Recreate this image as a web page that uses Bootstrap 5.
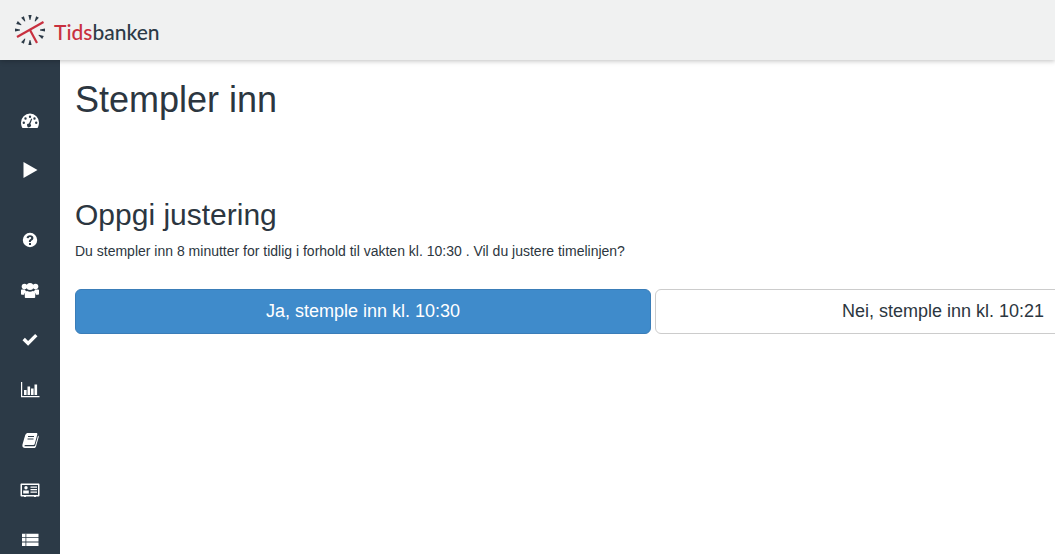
<!DOCTYPE html>
<html lang="no">
<head>
<meta charset="utf-8">
<title>Stempler inn</title>
<link href="https://cdn.jsdelivr.net/npm/bootstrap@5.3.0/dist/css/bootstrap.min.css" rel="stylesheet">
<style>
html,body{height:100%;overflow:hidden}
body{font-family:"Liberation Sans",Arial,sans-serif;color:#2c3640;background:#fff;width:1055px}
.topbar{height:60px;background:#f0f1f1;box-shadow:0 1px 5px rgba(0,0,0,.25);position:relative;z-index:2;padding-left:14px}
.brand-name{font-family:Lato,sans-serif;font-size:21px;line-height:1;color:#2c3a47;margin-left:8px;padding-top:2px;font-weight:500}
.brand-name b{font-weight:500;color:#c8303f}
.main-area{height:494px}
.sidenav{width:60px;flex:none;background:#2c3a47;padding-top:36px}
.nav-slot{height:50px;width:60px;display:flex;align-items:center;justify-content:center}
.nav-slot svg{width:20px;height:20px;fill:#fff;display:block}
.nav-gap{height:19px}
.content-pane{width:1156px;flex:none;padding-left:15px}
.page-title{font-size:36px;font-weight:400;line-height:40px;margin:20px 0 0;color:#2c3640}
.sub-title{font-size:30px;font-weight:400;line-height:33px;margin:78px 0 0;color:#2c3640}
.lead-note{font-size:14px;line-height:20px;margin:10px 0 0;color:#2c3640}
.btn-row{margin-top:28px;gap:4px}
.btn-stamp{flex:none;width:576px;height:45px;font-size:18px;line-height:1.3;border-radius:6px;padding:0 12px;display:flex;align-items:center;justify-content:center}
.btn-yes{background:#3f8bcb;border:1px solid #3a7db8;color:#fff}
.btn-no{background:#fff;border:1px solid #ccc;color:#2c3640}
</style>
</head>
<body>
<header class="topbar d-flex align-items-center">
  <svg width="32" height="32" viewBox="0 0 32 32" aria-label="Tidsbanken-logo">
    <g fill="#2c3a47">
      <path d="M14.400 1h3.200l-1.200 5h-.8z"/>
      <path d="M14.400 1h3.200l-1.200 5h-.8z" transform="rotate(30 16 16)"/>
      <path d="M14.400 1h3.200l-1.200 5h-.8z" transform="rotate(90 16 16)"/>
      <path d="M14.400 1h3.200l-1.200 5h-.8z" transform="rotate(120 16 16)"/>
      <path d="M14.400 1h3.200l-1.200 5h-.8z" transform="rotate(180 16 16)"/>
      <path d="M14.400 1h3.200l-1.200 5h-.8z" transform="rotate(210 16 16)"/>
      <path d="M14.400 1h3.200l-1.200 5h-.8z" transform="rotate(270 16 16)"/>
      <path d="M14.400 1h3.200l-1.200 5h-.8z" transform="rotate(300 16 16)"/>
      <path d="M14.400 1h3.200l-1.200 5h-.8z" transform="rotate(330 16 16)"/>
    </g>
    <path d="M3 23L29.500 8" stroke="#c8303f" stroke-width="2.200" fill="none"/>
    <path d="M16 16L23 29" stroke="#c8303f" stroke-width="2.200" fill="none"/>
  </svg>
  <div class="brand-name"><b>Tids</b>banken</div>
</header>
<div class="main-area d-flex">
  <nav class="sidenav">
    <div class="nav-slot"><svg viewBox="0 0 20 20"><path fill-rule="evenodd" d="M10 2.500a9 9 0 0 1 9 9c0 2.200-.6 4.200-1.500 5.500h-15C1.600 15.700 1 13.700 1 11.500a9 9 0 0 1 9-9zM10 4.500a1.200 1.200 0 1 0 0 2.400 1.200 1.200 0 0 0 0-2.400zM5.500 6.300a1.200 1.200 0 1 0 0 2.400 1.200 1.200 0 0 0 0-2.400zM14.500 6.300a1.200 1.200 0 1 0 0 2.400 1.200 1.200 0 0 0 0-2.400zM3.800 10.500a1.200 1.200 0 1 0 0 2.400 1.200 1.200 0 0 0 0-2.400zM16.200 10.500a1.200 1.200 0 1 0 0 2.400 1.200 1.200 0 0 0 0-2.400zM11.200 7.500L9 12.600a1.900 1.900 0 1 0 1.300.5L12.200 8z"/></svg></div>
    <div class="nav-slot"><svg viewBox="0 1 20 20"><path d="M3.500 2l14 8-14 8z"/></svg></div>
    <div class="nav-gap"></div>
    <div class="nav-slot"><svg viewBox="0 0 20 20"><path fill-rule="evenodd" d="M10 2.800a7.200 7.200 0 1 1 0 14.400 7.200 7.200 0 0 1 0-14.400zM10 5.200c-1.900 0-3.200 1-3.400 2.700l2 .3c.2-.8.700-1.200 1.400-1.200.7 0 1.200.4 1.200 1 0 .5-.3.8-1 1.300-.9.6-1.300 1.200-1.300 2.200v.4h2v-.3c0-.5.200-.7.900-1.200 1-.7 1.600-1.400 1.600-2.500 0-1.600-1.400-2.700-3.400-2.700zM9 13v2h2v-2z"/></svg></div>
    <div class="nav-slot"><svg viewBox="0 -1 20 20"><circle cx="4.500" cy="5.500" r="2.800"/><circle cx="15.500" cy="5.500" r="2.800"/><circle cx="10" cy="5.500" r="3.500"/><path d="M1 9.500c0-.6.500-1 1-1h3c.3 1 .8 1.700 1.500 2.200-1.300.5-2.200 1.600-2.400 3H2c-.6 0-1-.5-1-1zM19 9.500c0-.6-.5-1-1-1h-3c-.3 1-.8 1.700-1.500 2.200 1.300.5 2.200 1.600 2.400 3H18c.6 0 1-.5 1-1z"/><path d="M7.300 10c.8.500 1.700.8 2.700.8s1.900-.3 2.700-.8c1.500 0 2.500 1.200 2.500 3v3.200c0 .5-.5.800-1 .8H5.800c-.5 0-1-.3-1-.8V13c0-1.800 1-3 2.500-3z"/></svg></div>
    <div class="nav-slot"><svg viewBox="0 0 20 20"><path d="M2.500 10.200l2.400-2.400 3.200 3.100 7-7 2.400 2.400-9.400 9.400z"/></svg></div>
    <div class="nav-slot"><svg viewBox="0 0 20 20"><path d="M1 2h1.200v14H19.500v1.300H1z"/><path d="M4 10h2.600v5H4zM7.500 6.500h2.600V15H7.500zM11 8.500h2.600V15H11zM14.500 4.500h2.600V15h-2.600z"/></svg></div>
    <div class="nav-slot"><svg viewBox="0 0 20 20"><path fill-rule="evenodd" d="M6.500 3h9.800c.9 0 1.200.6 1 1.400l-2.600 9.500c-.2.700-.7 1.100-1.400 1.100H5.400c-.9 0-1.200.8-.8 1.200h9.700c.5 0 .8-.2.900-.6l2.900-10c.6.300.8.900.6 1.500l-2.700 9.400c-.2.800-.9 1.500-1.800 1.500H5c-1.600 0-3-1.400-2.600-3.100.1-.5 2.700-9.500 2.700-9.500.2-.8.700-1.400 1.400-1.400zM8 6v1h6V6zM7.500 8.500v1h6v-1z"/></svg></div>
    <div class="nav-slot"><svg viewBox="0 0 20 20"><path fill-rule="evenodd" d="M1.500 3.500h17c.6 0 1 .4 1 1v11c0 .6-.4 1-1 1h-17c-.6 0-1-.4-1-1v-11c0-.6.4-1 1-1zM2 5v10h16V5zM6 6a1.700 1.700 0 1 1 0 3.400A1.700 1.700 0 0 1 6 6zM3.200 10.500h5.600V13.500H3.200zM10.500 6.500H17v1.300h-6.500zM10.500 9H17v1.300h-6.500zM10.500 11.500H17v1.300h-6.500z"/><path d="M4 15.500h2V17H4zM14 15.500h2V17h-2z"/></svg></div>
    <div class="nav-slot"><svg viewBox="0 0 20 20"><path fill-rule="evenodd" d="M2 3.800h16.500v3.500H2zM2 8.100h16.500v3.500H2zM2 12.400h16.500v3.500H2z"/><path d="M5.500 3.800h.8v12.100h-.8z" fill="#2c3a47"/></svg></div>
  </nav>
  <main class="content-pane">
    <h1 class="page-title">Stempler inn</h1>
    <h2 class="sub-title">Oppgi justering</h2>
    <p class="lead-note">Du stempler inn 8 minutter for tidlig i forhold til vakten kl. 10:30 . Vil du justere timelinjen?</p>
    <div class="btn-row d-flex">
      <button type="button" class="btn btn-stamp btn-yes">Ja, stemple inn kl. 10:30</button>
      <button type="button" class="btn btn-stamp btn-no">Nei, stemple inn kl. 10:21</button>
    </div>
  </main>
</div>
</body>
</html>
